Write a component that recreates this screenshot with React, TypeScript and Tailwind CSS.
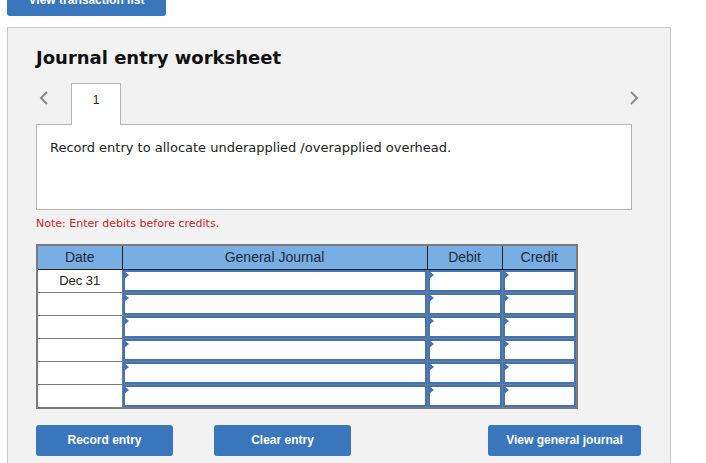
import React from "react";

const BLUE = "bg-[#3a76bb]";

function InputCell({ w }: { w: string }) {
  return (
    <td className={`${w} p-0 border border-[#7a7a7a] h-[23px]`}>
      <div className="relative h-[22px] bg-white border-2 border-[#3f74b6]">
        <div className="absolute -top-[1px] -left-[1px] w-0 h-0 border-y-[4px] border-y-transparent border-l-[5px] border-l-[#3f74b6]" />
      </div>
    </td>
  );
}

export default function App() {
  const rows = ["Dec 31", "", "", "", "", ""];
  return (
    <div className="w-[706px] h-[463px] overflow-hidden bg-white" style={{ fontFamily: '"DejaVu Sans", Verdana, sans-serif' }}>
      <div className={`ml-[7px] -mt-[16px] w-[159px] h-[32px] rounded-[3px] ${BLUE} flex items-center justify-center text-white text-[12px] font-bold`} style={{ fontFamily: '"Liberation Sans", Arial, sans-serif' }}>
        View transaction list
      </div>
      <div className="ml-[7px] mt-[11px] w-[664px] h-[450px] border border-[#c8c8c8] bg-[#f2f2f2] pl-[28px]">
        <h1 className="pt-[19px] text-[18px] leading-[22px] font-bold text-[#111]">Journal entry worksheet</h1>
        <div className="mt-[14px] flex items-end w-[606px] h-[41px]">
          <div className="self-center ml-[2px] mt-[-12px]">
            <svg width="12" height="14" viewBox="0 0 12 14">
              <path d="M9 1 L3 7 L9 13" fill="none" stroke="#8a8a8a" strokeWidth="2" />
            </svg>
          </div>
          <div className="relative z-10 ml-[21px] -mb-px w-[50px] h-[42px] bg-white border border-b-0 border-[#b4b4b4] flex justify-center pt-[7px] text-[12px] text-[#222]" style={{ fontFamily: '"Liberation Sans", Arial, sans-serif' }}>
            1
          </div>
          <div className="flex-1" />
          <div className="self-center mt-[-12px] mr-[2px]">
            <svg width="12" height="14" viewBox="0 0 12 14">
              <path d="M3 1 L9 7 L3 13" fill="none" stroke="#8a8a8a" strokeWidth="2" />
            </svg>
          </div>
        </div>
        <div className="w-[596px] h-[86px] bg-white border border-[#b4b4b4] pl-[13px] pt-[13px] text-[13px] text-[#222]">
          Record entry to allocate underapplied /overapplied overhead.
        </div>
        <div className="mt-[7px] text-[11px] leading-[14px] text-[#c4262b]">Note: Enter debits before credits.</div>
        <table className="mt-[13px] w-[541px] border-collapse border-2 border-[#7a7a7a] table-fixed text-[13px] text-[#222]" style={{ fontFamily: '"Liberation Sans", Arial, sans-serif' }}>
          <thead>
            <tr className="bg-[#79aee4] h-[24px] text-[14px] text-[#1f2a36]">
              <th className="w-[85px] font-normal border-r border-b border-[#222] p-0">Date</th>
              <th className="w-[305px] font-normal border-r border-b border-[#222] p-0">General Journal</th>
              <th className="w-[75px] font-normal border-r border-b border-[#222] p-0">Debit</th>
              <th className="w-[75px] font-normal border-b border-[#222] p-0">Credit</th>
            </tr>
          </thead>
          <tbody>
            {rows.map((d, i) => (
              <tr key={i}>
                <td className="w-[85px] h-[23px] p-0 bg-white border border-[#7a7a7a] text-center">{d}</td>
                <InputCell w="w-[305px]" />
                <InputCell w="w-[75px]" />
                <InputCell w="w-[75px]" />
              </tr>
            ))}
          </tbody>
        </table>
        <div className="mt-[16px] flex text-white text-[12px] font-bold" style={{ fontFamily: '"Liberation Sans", Arial, sans-serif' }}>
          <div className={`w-[137px] h-[31px] rounded-[3px] ${BLUE} flex items-center justify-center`}>Record entry</div>
          <div className={`ml-[41px] w-[137px] h-[31px] rounded-[3px] ${BLUE} flex items-center justify-center`}>Clear entry</div>
          <div className={`ml-[137px] w-[153px] h-[31px] rounded-[3px] ${BLUE} flex items-center justify-center`}>View general journal</div>
        </div>
      </div>
    </div>
  );
}
